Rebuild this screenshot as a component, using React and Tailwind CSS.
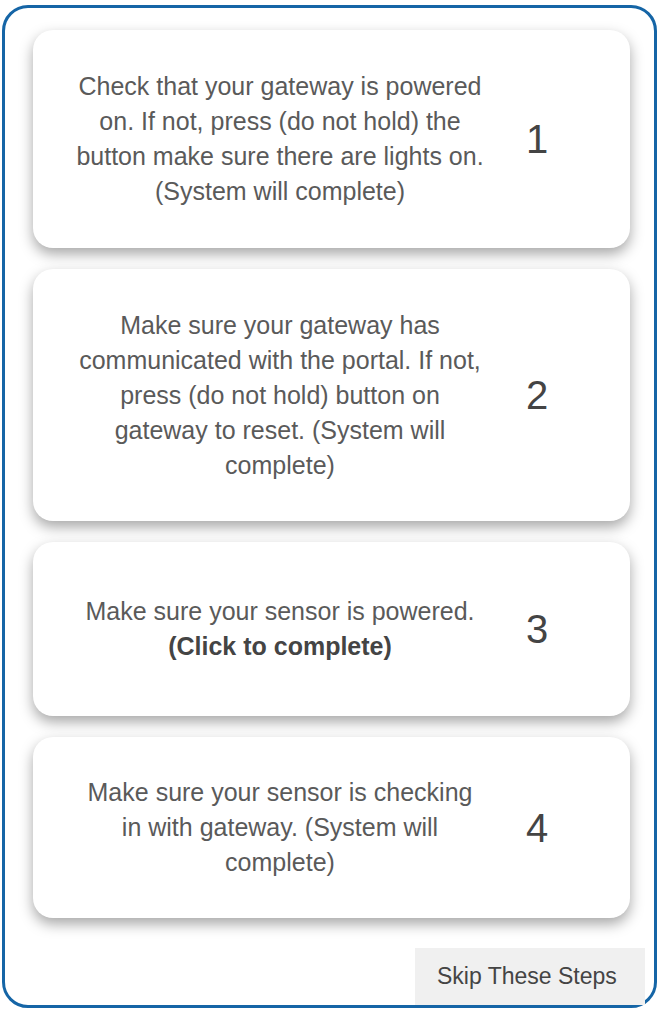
const steps = [
  {
    n: 1,
    h: "h-[218px]",
    lines: [
      "Check that your gateway is powered",
      "on. If not, press (do not hold) the",
      "button make sure there are lights on.",
      "(System will complete)",
    ],
  },
  {
    n: 2,
    h: "h-[252px]",
    lines: [
      "Make sure your gateway has",
      "communicated with the portal. If not,",
      "press (do not hold) button on",
      "gateway to reset. (System will",
      "complete)",
    ],
  },
  {
    n: 3,
    h: "h-[174px]",
    lines: ["Make sure your sensor is powered."],
    bold: "(Click to complete)",
  },
  {
    n: 4,
    h: "h-[181px]",
    lines: [
      "Make sure your sensor is checking",
      "in with gateway. (System will",
      "complete)",
    ],
  },
];

const StepCard = ({ step }) => (
  <div
    className={`${step.h} flex items-center rounded-[20px] bg-white shadow-[0_6px_14px_rgba(0,0,0,0.35)]`}
  >
    <div className="ml-[20px] w-[454px] text-center text-[25px] leading-[35px] text-[#5a5a5a]">
      {step.lines.map((l, i) => (
        <div key={i}>{l}</div>
      ))}
      {step.bold && <div className="font-bold text-[#444]">{step.bold}</div>}
    </div>
    <div className="w-[60px] text-center text-[40px] text-[#444]">
      {step.n}
    </div>
  </div>
);

export default function App() {
  return (
    <div
      className="w-[660px] h-[1012px] bg-white pt-[5px] pl-[2px]"
      style={{ fontFamily: '"Liberation Sans", Arial, sans-serif' }}
    >
      <div className="w-[655px] h-[1003px] border-[3px] border-[#1565a6] rounded-[26px] flex flex-col pt-[22px] pl-[28px] pr-[24px]">
        <div className="flex flex-col gap-[21px]">
          {steps.map((s) => (
            <StepCard key={s.n} step={s} />
          ))}
        </div>
        <button className="mt-auto self-end -mr-[15px] h-[57px] w-[230px] bg-[#f0f0f0] text-[#444] text-[23px] text-left pl-[22px]">
          Skip These Steps
        </button>
      </div>
    </div>
  );
}
